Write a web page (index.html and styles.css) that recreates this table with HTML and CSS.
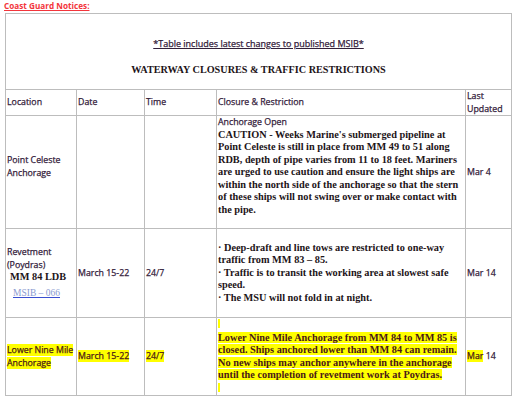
FILE: index.html
```html
<!DOCTYPE html>
<html>
<head>
<meta charset="utf-8">
<link rel="stylesheet" href="styles.css">
</head>
<body>
<div class="title">Coast Guard Notices:</div>
<table class="notices">
  <colgroup>
    <col class="c-loc"><col class="c-date"><col class="c-time"><col class="c-clo"><col class="c-upd">
  </colgroup>
  <tr class="r-head">
    <td colspan="5" class="head-cell">
      <div class="note">*Table includes latest changes to published MSIB*</div>
      <div class="heading">WATERWAY CLOSURES &amp; TRAFFIC RESTRICTIONS</div>
    </td>
  </tr>
  <tr class="r-cols">
    <td class="sans">Location</td>
    <td class="sans">Date</td>
    <td class="sans">Time</td>
    <td class="sans">Closure &amp; Restriction</td>
    <td class="sans">Last<br>Updated</td>
  </tr>
  <tr class="r1">
    <td class="sans loc1">Point Celeste<br>Anchorage</td>
    <td></td>
    <td></td>
    <td class="clo1">
      <div class="sans">Anchorage Open</div>
      <div class="serif">CAUTION - Weeks Marine's submerged pipeline at Point Celeste is still in place from MM 49 to 51 along RDB, depth of pipe varies from 11 to 18 feet. Mariners are urged to use caution and ensure the light ships are within the north side of the anchorage so that the stern of these ships will not swing over or make contact with the pipe.</div>
    </td>
    <td class="sans">Mar 4</td>
  </tr>
  <tr class="r2">
    <td>
      <div class="sans">Revetment<br>(Poydras)</div>
      <div class="serif ind1">MM 84 LDB</div>
      <div class="ind2"><a class="link">MSIB – 066</a></div>
    </td>
    <td class="sans">March 15-22</td>
    <td class="sans">24/7</td>
    <td class="serif">· Deep-draft and line tows are restricted to one-way traffic from MM 83 – 85.<br>· Traffic is to transit the working area at slowest safe speed.<br>· The MSU will not fold in at night.</td>
    <td class="sans">Mar 14</td>
  </tr>
  <tr class="r3">
    <td class="sans red"><span class="hl">Lower Nine Mile<br>Anchorage</span></td>
    <td class="sans red"><span class="hl">March 15-22</span></td>
    <td class="sans red"><span class="hl">24/7</span></td>
    <td class="serif red">
      <div class="markline"><span class="mark"></span></div>
      <div><span class="hl">Lower Nine Mile Anchorage from MM 84 to MM 85 is closed. Ships anchored lower than MM 84 can remain. No new ships may anchor anywhere in the anchorage until the completion of revetment work at Poydras.</span></div>
      <div class="markline"><span class="mark"></span></div>
    </td>
    <td class="sans"><span class="hl red">Mar</span> 14</td>
  </tr>
</table>
</body>
</html>
```

FILE: styles.css
```css
html, body {
  margin: 0;
  padding: 0;
  background: #ffffff;
}
.title {
  font-family: "Open Sans", "Liberation Sans", sans-serif;
  font-weight: bold;
  font-size: 8.2px;
  line-height: 12px;
  color: #f3363c;
  text-decoration: underline;
  padding-left: 4px;
  height: 13px;
}
.notices {
  margin-left: 5px;
  width: 507px;
  table-layout: fixed;
  border-collapse: collapse;
  border: 1px solid #a8a8a8;
}
.c-loc { width: 71px; }
.c-date { width: 68px; }
.c-time { width: 72px; }
.c-clo { width: 249px; }
.c-upd { width: 46px; }
.notices td {
  border: 1px solid #bdbdbd;
  padding: 0 1px 0 1px;
  vertical-align: middle;
}
.sans {
  font-family: "Open Sans", "Liberation Sans", sans-serif;
  font-size: 8.8px;
  line-height: 12.5px;
  color: #33203a;
  -webkit-text-stroke: 0.25px;
}
.serif {
  font-family: "Liberation Serif", serif;
  font-weight: bold;
  font-size: 10.3px;
  line-height: 12.5px;
  color: #1d1418;
}
.r-head { height: 76px; }
.r-cols { height: 26px; }
.r1 { height: 113px; }
.r2 { height: 89px; }
.r3 { height: 77px; }
.notices td.head-cell {
  vertical-align: top;
  text-align: center;
  padding: 0;
}
.note {
  margin-top: 24px;
  font-family: "Open Sans", "Liberation Sans", sans-serif;
  font-size: 9px;
  line-height: 12px;
  color: #33203a;
  -webkit-text-stroke: 0.25px;
  text-decoration: underline;
}
.heading {
  margin-top: 13px;
  font-family: "Liberation Serif", serif;
  font-weight: bold;
  font-size: 10.2px;
  line-height: 14px;
  color: #1d1418;
}
.notices td.loc1 { padding-bottom: 11px; }
.notices td.clo1 { vertical-align: top; }
.ind1 { padding-left: 3px; }
.ind2 {
  padding-left: 6px;
  line-height: 13px;
}
.link {
  font-family: "Liberation Serif", serif;
  font-size: 9.5px;
  color: #8a9bd0;
  text-decoration: underline;
  text-decoration-color: #3a4fd0;
}
.hl { background: #ffff00; }
.red { color: #4a1818; }
.markline {
  height: 12.5px;
}
.mark {
  display: block;
  width: 2px;
  height: 9px;
  margin-top: 1px;
  background: #ffff00;
}
```
